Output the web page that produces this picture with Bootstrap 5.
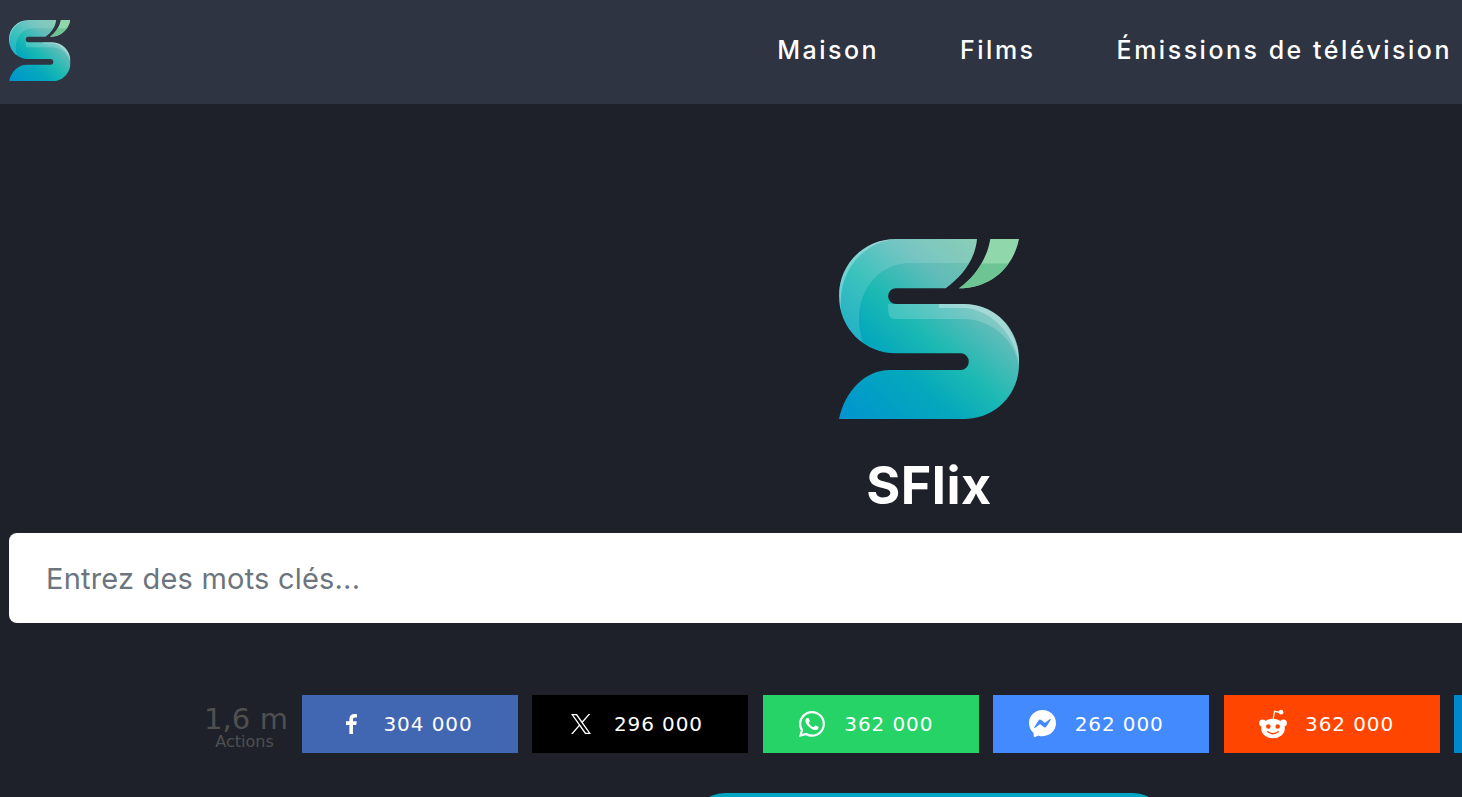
<!DOCTYPE html>
<html lang="fr">
<head>
<meta charset="utf-8">
<title>SFlix</title>
<link href="https://cdn.jsdelivr.net/npm/bootstrap@5.3.0/dist/css/bootstrap.min.css" rel="stylesheet">
<style>
html,body{overflow-x:hidden;background:#1e212a}
body{font-family:"Inter",sans-serif;color:#fff;min-width:1462px}
.topbar{background:#2e3441;height:104px;padding:19px 10px 23px 9px}
.brandmark{width:61.500px;height:61.500px;display:block;margin-top:.5px}
.toplink{color:#fff;font-size:25px;letter-spacing:2.500px;line-height:62px;padding:0;text-decoration:none;white-space:nowrap;font-weight:500}
.toplinks{gap:81px}
.widepage{width:1858px;padding:135px 9px 0}
.heromark{width:180px;height:180px;display:block}
.herotitle{font-size:52px;font-weight:700;line-height:58px;margin:38px 0 18px;text-align:center;letter-spacing:.5px}
.searchbox{height:90px;border:0;border-radius:8px;padding:0 37px;font-size:29px;color:#212529;width:100%;letter-spacing:.2px}
.searchbox::placeholder{color:#6c757d;opacity:1}
.sharerow{margin-top:72px;height:58px;font-family:"DejaVu Sans",sans-serif;margin-left:195px}
.sharecount{width:83px;margin-right:15px;text-align:center;color:#505050;line-height:1;white-space:nowrap}
.sharecount b{display:block;font-weight:400;font-size:29px;line-height:30px;margin-top:9px;letter-spacing:.1px}
.sharecount span{display:block;font-size:16px;line-height:15px;margin-left:-2px}
.sharebtn{width:216px;height:58px;flex:none;color:#fff;font-size:20px;letter-spacing:.9px;display:flex;align-items:center;padding-left:34px;text-decoration:none;margin-right:14.400px}
.iconslot{width:30px;margin-right:17.500px;flex:none;display:flex;justify-content:center}
.iconslot svg{flex:none;fill:#fff;display:block}
.s-fb{background:#4267b2}.s-x{background:#000}.s-wa{background:#25d366}.s-ms{background:#448aff}.s-rd{background:#ff4500}.s-tg{background:#0088cc}
.playpill{display:block;width:478px;height:70px;margin:40px auto 0;background:#00a6c2;border-radius:35px}
</style>
</head>
<body>
<header class="topbar d-flex justify-content-between align-items-start">
  <a href="#" class="d-block">
    <svg class="brandmark" viewBox="0 0 180 180" role="img" aria-label="SFlix">
      <defs>
        <linearGradient id="sgrad" gradientUnits="userSpaceOnUse" x1="10" y1="190" x2="170" y2="10">
          <stop offset="0" stop-color="#0094d0"/>
          <stop offset=".33" stop-color="#04a8bc"/>
          <stop offset=".5" stop-color="#1cb9b3"/>
          <stop offset=".72" stop-color="#62bcb9"/>
          <stop offset="1" stop-color="#7fc9a6"/>
        </linearGradient>
        <clipPath id="sclip"><path d="M138 0C136 22 122 38 106.700 49.300H57A7.800 7.800 0 0 0 57 65H125.700C156 65 180 90 180 120V125C180 156 156 180 125 180H0C6 152 26 131 51 131H122.300A8.400 8.400 0 0 0 122.300 114.300H57C25 114.300 0 89 0 57S25 0 57 0Z"/></clipPath>
        <clipPath id="leafclip"><path d="M151.300 0H180C174 30 150 49.300 120 49.300C136 38 148 20 151.300 0Z"/></clipPath>
        <symbol id="slogo" viewBox="0 0 180 180">
          <path d="M138 0C136 22 122 38 106.700 49.300H57A7.800 7.800 0 0 0 57 65H125.700C156 65 180 90 180 120V125C180 156 156 180 125 180H0C6 152 26 131 51 131H122.300A8.400 8.400 0 0 0 122.300 114.300H57C25 114.300 0 89 0 57S25 0 57 0Z" fill="url(#sgrad)"/>
          <g clip-path="url(#sclip)">
            <path d="M0 0H180V24H72C40 24 20 50 20 80C20 90 22 98 25 106L0 110Z" fill="#fff" opacity=".14"/>
            <path d="M45 65H180V128C176 100 152 80 124 80H56C50 80 49 76 49 65Z" fill="#fff" opacity=".18"/>
            <path d="M100 65H126C156 65 180 90 180 125C176 95 152 71 126 69H100Z" fill="#fff" opacity=".3"/>
            <path d="M0 40C0 20 25 0 57 0C30 2 3 25 2 60C1 72 2 80 5 88C1 76 0 60 0 40Z" fill="#fff" opacity=".3"/>
          </g>
          <g clip-path="url(#leafclip)">
            <rect x="110" y="0" width="70" height="52" fill="#90d8ab"/>
            <rect x="110" y="24.500" width="70" height="27" fill="#6cc592"/>
          </g>
        </symbol>
      </defs>
      <use href="#slogo"/>
    </svg>
  </a>
  <nav class="nav toplinks">
    <a class="toplink" href="#">Maison</a>
    <a class="toplink" href="#">Films</a>
    <a class="toplink" href="#">Émissions de télévision</a>
  </nav>
</header>
<main class="widepage">
  <div class="d-flex justify-content-center"><svg class="heromark" viewBox="0 0 180 180" aria-hidden="true"><use href="#slogo"/></svg></div>
  <h1 class="herotitle">SFlix</h1>
  <form><input class="searchbox form-control" type="text" placeholder="Entrez des mots clés..."></form>
  <div class="sharerow d-flex align-items-start">
    <div class="sharecount"><b>1,6 m</b><span>Actions</span></div>
    <a class="sharebtn s-fb" href="#"><span class="iconslot"><svg width="14" height="20" viewBox="0 0 14 20"><path d="M9 20V11h3.200l.6-3.700H9V5.200C9 4.100 9.400 3.400 11 3.400h2V.2C12.600.1 11.500 0 10.300 0 7.500 0 5.400 1.700 5.400 4.900v2.400H2V11h3.400v9z"/></svg></span><span>304 000</span></a>
    <a class="sharebtn s-x" href="#"><span class="iconslot"><svg width="24" height="24" viewBox="0 0 24 24"><path d="M13.900 10.470 21.300 2h-1.750l-6.430 7.350L8 2H2l7.760 11.050L2 22h1.750l6.780-7.760L16 22h6zM4.400 3.300h2.700l12.500 17.500h-2.700z"/></svg></span><span>296 000</span></a>
    <a class="sharebtn s-wa" href="#"><span class="iconslot"><svg width="26" height="26" viewBox="0 0 16 16"><path d="M13.601 2.326A7.854 7.854 0 0 0 7.994 0C3.627 0 .068 3.558.064 7.926c0 1.399.366 2.760 1.057 3.965L0 16l4.204-1.102a7.933 7.933 0 0 0 3.790.965h.004c4.368 0 7.926-3.558 7.930-7.930A7.898 7.898 0 0 0 13.600 2.326zM7.994 14.521a6.573 6.573 0 0 1-3.356-.920l-.240-.144-2.494.654.666-2.433-.156-.251a6.560 6.560 0 0 1-1.007-3.505c0-3.626 2.957-6.584 6.591-6.584a6.560 6.560 0 0 1 4.660 1.931 6.557 6.557 0 0 1 1.928 4.660c-.004 3.639-2.961 6.592-6.592 6.592zm3.615-4.934c-.197-.099-1.170-.578-1.353-.646-.182-.065-.315-.099-.445.099-.133.197-.513.646-.627.775-.114.133-.232.148-.430.050-.197-.100-.836-.308-1.592-.985-.590-.525-.985-1.175-1.103-1.372-.114-.198-.011-.304.088-.403.087-.088.197-.232.296-.346.100-.114.133-.198.198-.330.065-.134.034-.248-.015-.347-.050-.099-.445-1.076-.612-1.470-.160-.389-.323-.335-.445-.340-.114-.007-.247-.007-.380-.007a.729.729 0 0 0-.529.247c-.182.198-.691.677-.691 1.654 0 .977.710 1.916.810 2.049.098.133 1.394 2.132 3.383 2.992.470.205.840.326 1.129.418.475.152.904.129 1.246.080.380-.058 1.171-.480 1.338-.943.164-.464.164-.860.114-.943-.049-.084-.182-.133-.380-.232z"/></svg></span><span>362 000</span></a>
    <a class="sharebtn s-ms" href="#"><span class="iconslot"><svg width="27" height="28" viewBox="0 0 16 16.600"><path d="M0 7.760C0 3.301 3.493 0 8 0s8 3.301 8 7.760-3.493 7.760-8 7.760c-.810 0-1.586-.107-2.316-.307a.639.639 0 0 0-.427.030l-1.588.702a.640.640 0 0 1-.898-.566l-.044-1.423a.639.639 0 0 0-.215-.456C.956 12.108 0 10.092 0 7.760zm5.546-1.459-2.350 3.728c-.225.358.214.761.551.506l2.525-1.916a.480.480 0 0 1 .578-.002l1.869 1.402a1.200 1.200 0 0 0 1.735-.320l2.350-3.728c.226-.358-.214-.761-.551-.506L9.728 7.381a.480.480 0 0 1-.578.002L7.281 5.980a1.200 1.200 0 0 0-1.735.320z"/></svg></span><span>262 000</span></a>
    <a class="sharebtn s-rd" href="#"><span class="iconslot"><svg width="28" height="30" viewBox="0 0 28 30"><path d="M14 11 15.500 2.300l5.500 1" fill="none" stroke="#fff" stroke-width="1.200"/><circle cx="22" cy="3.200" r="2.400"/><circle cx="3.600" cy="14" r="3.500"/><circle cx="24.400" cy="14" r="3.500"/><ellipse cx="14" cy="19.500" rx="11.800" ry="9.800"/><circle cx="9.300" cy="17.500" r="2.300" fill="#ff4500"/><circle cx="18.700" cy="17.500" r="2.300" fill="#ff4500"/><path d="M8.800 22.800c3 2.500 7.400 2.500 10.400 0" fill="none" stroke="#ff4500" stroke-width="1.400" stroke-linecap="round"/></svg></span><span>362 000</span></a>
    <a class="sharebtn s-tg" href="#" aria-label="Partager"></a>
  </div>
  <a class="playpill" href="#" aria-label="Rechercher"></a>
</main>
</body>
</html>
